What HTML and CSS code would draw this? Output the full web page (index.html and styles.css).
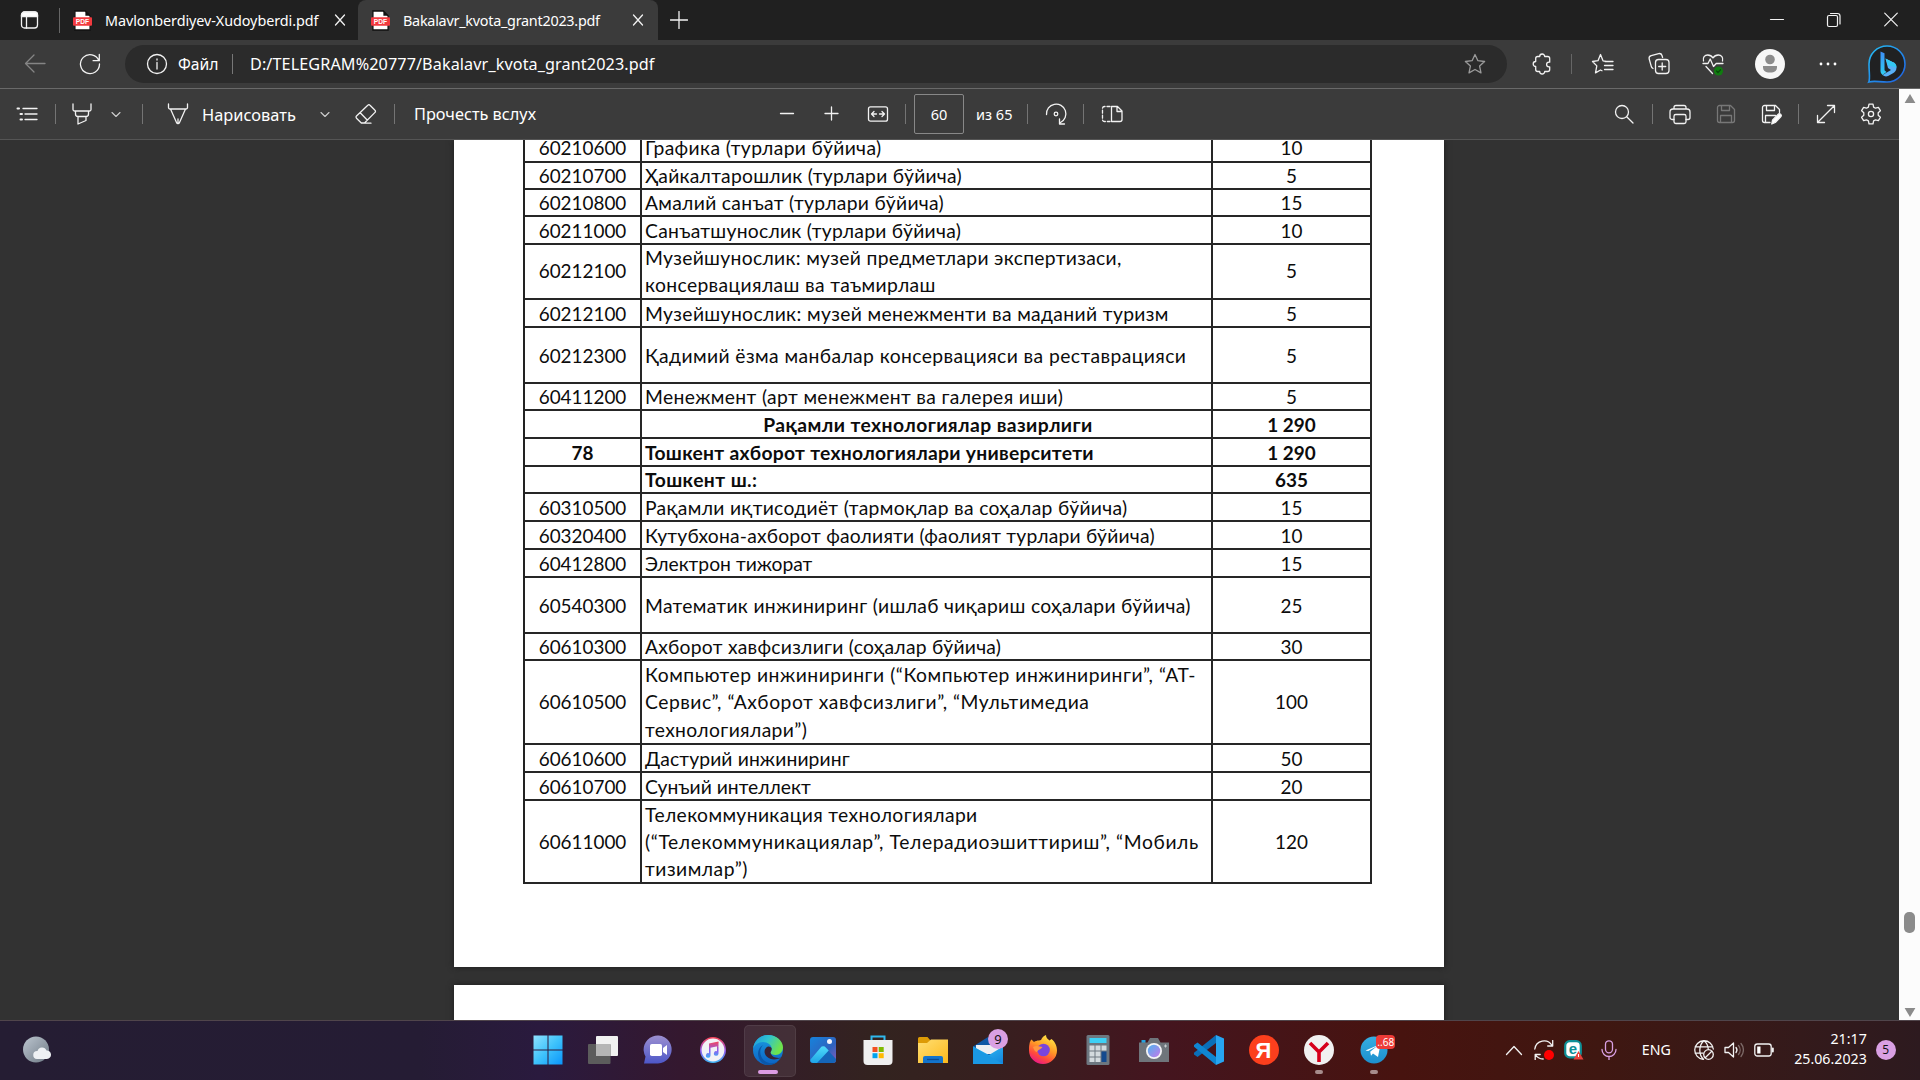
FILE: index.html
```html
<!DOCTYPE html>
<html lang="ru">
<head>
<meta charset="utf-8">
<title>Bakalavr_kvota_grant2023.pdf</title>
<link rel="stylesheet" href="styles.css">
</head>
<body>
<svg class="defs" width="0" height="0">
  <defs>
    <linearGradient id="gWin" x1="0" y1="0" x2="1" y2="1"><stop offset="0" stop-color="#8fe2ff"/><stop offset=".5" stop-color="#3fc3fb"/><stop offset="1" stop-color="#0a95fb"/></linearGradient>
    <linearGradient id="gMoon" x1="0" y1="0" x2="1" y2="1"><stop offset="0" stop-color="#bcc6d0"/><stop offset="1" stop-color="#6f7a85"/></linearGradient>
    <linearGradient id="gChat" x1="0" y1="0" x2="0" y2="1"><stop offset="0" stop-color="#9c8fd0"/><stop offset="1" stop-color="#4d57c8"/></linearGradient>
    <linearGradient id="gMusic" x1="0" y1="0" x2="0" y2="1"><stop offset="0" stop-color="#f5455c"/><stop offset=".55" stop-color="#8c5af0"/><stop offset="1" stop-color="#3fb3f5"/></linearGradient>
    <linearGradient id="gEdgeA" x1="0" y1="0" x2="1" y2=".4"><stop offset="0" stop-color="#1c96dd"/><stop offset=".5" stop-color="#2fc3d0"/><stop offset="1" stop-color="#6fe34b"/></linearGradient>
    <linearGradient id="gEdgeB" x1="0" y1="0" x2="0" y2="1"><stop offset="0" stop-color="#1b9de2"/><stop offset="1" stop-color="#0b62c4"/></linearGradient>
    <linearGradient id="gPhoto" x1="0" y1="0" x2="1" y2="1"><stop offset="0" stop-color="#1683dc"/><stop offset=".6" stop-color="#2f62bd"/><stop offset="1" stop-color="#8a5cb8"/></linearGradient>
    <linearGradient id="gMount" x1="0" y1="0" x2="0" y2="1"><stop offset="0" stop-color="#4fdcfa"/><stop offset="1" stop-color="#1ea4e6"/></linearGradient>
    <linearGradient id="gFold" x1="0" y1="0" x2="1" y2="1"><stop offset="0" stop-color="#ffdf73"/><stop offset="1" stop-color="#fcb91c"/></linearGradient>
    <linearGradient id="gMail" x1="0" y1="0" x2="1" y2="1"><stop offset="0" stop-color="#36c4f6"/><stop offset="1" stop-color="#1283dc"/></linearGradient>
    <linearGradient id="gFox" x1=".8" y1="0" x2=".3" y2="1"><stop offset="0" stop-color="#fff04a"/><stop offset=".45" stop-color="#ff9a26"/><stop offset=".75" stop-color="#ff4a3c"/><stop offset="1" stop-color="#e8168c"/></linearGradient>
    <linearGradient id="gLens" x1="0" y1="0" x2="1" y2="1"><stop offset="0" stop-color="#4fb4ee"/><stop offset="1" stop-color="#c478ea"/></linearGradient>
    <linearGradient id="gTg" x1="0" y1="0" x2="0" y2="1"><stop offset="0" stop-color="#36aee2"/><stop offset="1" stop-color="#1c8fcd"/></linearGradient>
    <linearGradient id="gBing" x1="0" y1="0" x2="1" y2="1"><stop offset="0" stop-color="#25c0f5"/><stop offset="1" stop-color="#1f5de0"/></linearGradient>
    <linearGradient id="gBingB" x1="0" y1="0" x2="0" y2="1"><stop offset="0" stop-color="#3d8df6"/><stop offset="1" stop-color="#2fd0f2"/></linearGradient>
    <symbol id="pdf" viewBox="0 0 20 22">
      <path d="M2 1h11l5 5v15H2z" fill="#fff" stroke="#111" stroke-width="1.4"/>
      <path d="M13 1l5 5h-5z" fill="#111"/>
      <rect x="0" y="7.500" width="20" height="9" rx="1" fill="#f23a3f"/>
      <text x="10" y="14.800" text-anchor="middle" class="pdf-label">PDF</text>
    </symbol>
    <symbol id="close" viewBox="0 0 12 12"><path d="M1.500 1l9 10M10.500 1l-9 10"/></symbol>
    <symbol id="chev" viewBox="0 0 16 16"><path d="M4 6.500l4 4 4-4"/></symbol>
    <symbol id="star" viewBox="0 0 24 24"><path d="M12 2.500l2.900 6.200 6.700.8-5 4.600 1.400 6.800-6-3.400-6 3.400 1.400-6.800-5-4.600 6.700-.8z"/></symbol>
  </defs>
</svg>

<header class="tabs">
  <svg class="ic workspace" viewBox="0 0 20 20"><rect x="1.500" y="2" width="16" height="16" rx="3"/><path d="M1.500 5a3 3 0 013-3h10a3 3 0 013 3v1.500h-16z" fill="#fff"/><path d="M6.500 7v11"/></svg>
  <i class="tab-div"></i>
  <div class="tab">
    <svg class="pdf-ic"><use href="#pdf"/></svg>
    <span class="t tab-a">Mavlonberdiyev-Xudoyberdi.pdf</span>
    <svg class="ic x-ic"><use href="#close"/></svg>
  </div>
  <div class="tab active">
    <svg class="pdf-ic"><use href="#pdf"/></svg>
    <span class="t tab-b">Bakalavr_kvota_grant2023.pdf</span>
    <svg class="ic x-ic"><use href="#close"/></svg>
  </div>
  <svg class="ic new-tab" viewBox="0 0 18 18"><path d="M9 .5v17M.5 9h17"/></svg>
  <div class="win">
    <svg class="ic" viewBox="0 0 16 16"><path d="M1.500 7.500h13"/></svg>
    <svg class="ic" viewBox="0 0 16 16"><rect x="1.500" y="3.500" width="10" height="11" rx="1.500"/><path d="M4.500 1.500h7a2.500 2.500 0 012.500 2.500v8"/></svg>
    <svg class="ic" viewBox="0 0 16 16"><path d="M1.700 1.200l12.600 12.600M14.300 1.200L1.700 13.800"/></svg>
  </div>
</header>

<nav class="nav">
  <svg class="ic n-back" viewBox="0 0 24 24"><path d="M22 11.500H2.500M11 3L2.500 11.500l8.500 8.500"/></svg>
  <svg class="ic n-reload" viewBox="0 0 24 24"><path d="M20.800 8.500A9.500 9.500 0 1021.500 12M21.300 2.500v6.200h-6.200"/></svg>
  <div class="address">
    <svg class="ic" viewBox="0 0 24 24"><circle cx="12" cy="12" r="9.500"/><path d="M12 10.500v6.500M12 7v1"/></svg>
    <span class="t scheme">Файл</span>
    <i class="a-div"></i>
    <span class="t url">D:/TELEGRAM%20777/Bakalavr_kvota_grant2023.pdf</span>
    <svg class="ic dim a-star"><use href="#star"/></svg>
  </div>
  <svg class="ic n-puzzle" viewBox="0 0 24 24"><path d="M9.700 4.500a2.500 2.500 0 015 0h3a2 2 0 012 2v3.700h-.8a2.300 2.300 0 000 4.600h.8v2.700a2 2 0 01-2 2h-3a2.500 2.500 0 01-5 0h-2a2 2 0 01-2-2v-3a2.500 2.500 0 010-5v-3a2 2 0 012-2z"/></svg>
  <i class="n-div"></i>
  <svg class="ic n-fav" viewBox="0 0 24 24"><path d="M22 9.500h-6.500L12 8.800 9.500 2.500 7 8.700l-5.500.8 4.300 4.400-1.300 7 5-2.900 1.500.8M14 9.500h8M13.500 13.500H22M13.500 17.500H22"/></svg>
  <svg class="ic n-coll" viewBox="0 0 24 24"><path d="M6 16.500a3 3 0 01-1.800-2.300L2.200 7a2.800 2.800 0 012-3.400l7.500-2A2.800 2.800 0 0115 3.500l.6 2"/><rect x="8.500" y="7.500" width="13.500" height="14" rx="3"/><path d="M15.200 11v7M11.700 14.500h7"/></svg>
  <svg class="ic n-heart" viewBox="0 0 24 24"><path d="M2.500 9C1.500 5.500 3.700 3 6.700 3c2.500 0 4.200 1.300 5.300 3 1.100-1.700 2.800-3 5.300-3C20.300 3 22.500 5.500 21.500 9M2 11.500h5l2.200-4.500 3.300 7.500 2.700-3H22M5 14.500l6.500 7"/><circle cx="17.500" cy="19" r="4.600" fill="#107c10" stroke="none"/><path d="M15.500 19l1.500 1.500 2.500-2.700" stroke="#0a4a0a"/></svg>
  <svg class="n-avatar" viewBox="0 0 30 30"><circle cx="15" cy="15" r="15" fill="#f7f7f7"/><circle cx="15" cy="10.500" r="4.800" fill="#8c8c8c"/><path d="M8 17h14v1.500a5 5 0 01-5 5h-4a5 5 0 01-5-5z" fill="#8c8c8c"/></svg>
  <svg class="n-dots" viewBox="0 0 24 24"><circle cx="5" cy="12" r="1.400" fill="#fff"/><circle cx="12" cy="12" r="1.400" fill="#fff"/><circle cx="19" cy="12" r="1.400" fill="#fff"/></svg>
  <svg class="n-bing" viewBox="0 0 40 40"><path d="M1.800 38c1.500-3 .2-9 .2-18A18 18 0 1120 38c-8 0-13-1.500-18.200 0z" fill="#202122" stroke="url(#gBing)" stroke-width="1.600"/><path d="M13.500 7.500l4 1.800v17l2 1.700-4 3a4.500 4.500 0 01-2-3.700z" fill="url(#gBingB)"/><path d="M18.500 14.500l7 3.500a6 6 0 014 5.500c0 3-1.500 4.500-3.500 5.700l-4.500 2.600a5.500 5.500 0 01-6-.8l8.500-5-3-2z" fill="#58b0f7"/><path d="M18.500 14.500l7 3.500a6 6 0 014 5.500l-8.500-2z" fill="#33c8f3"/></svg>
</nav>

<div class="main">
<div class="reader">
  <div class="pdfbar">
    <svg class="ic p-list" viewBox="0 0 24 24"><path d="M8 6.500h14M10 12h12M10 17.500h12"/><path d="M2.500 6.500h1.500M5.500 12H7M5.500 17.500H7" stroke-width="2"/></svg>
    <i class="d p-d1"></i>
    <svg class="ic p-hi" viewBox="0 0 24 24"><path d="M3 2v5.500a1.500 1.500 0 001.500 1.500h15a1.500 1.500 0 001.500-1.500V2M5.500 9v3a2.500 2.500 0 002.500 2.500h8a2.500 2.500 0 002.500-2.500V9M8 14.500V22l8-3.500v-4"/></svg>
    <svg class="ic p-c1"><use href="#chev"/></svg>
    <i class="d p-d2"></i>
    <svg class="ic p-pen" viewBox="0 0 24 24"><path d="M2.500 2v3.500a1.500 1.500 0 001.500 1.500h16a1.500 1.500 0 001.500-1.500V2M4.500 7l6 13.500c.6 1.500 2.400 1.500 3 0L19.500 7M12 17v4"/></svg>
    <span class="t draw">Нарисовать</span>
    <svg class="ic p-c2"><use href="#chev"/></svg>
    <svg class="ic p-er" viewBox="0 0 24 24"><path d="M13.800 3.200a1.500 1.500 0 012.200 0l5 5a1.500 1.500 0 010 2.200L10.500 21H7.300L2.500 16.200a1.500 1.500 0 010-2.200zM6.200 10.800l7 7.200M7.500 21.200h9.500"/></svg>
    <i class="d p-d3"></i>
    <span class="t read">Прочесть вслух</span>
    <svg class="ic p-minus" viewBox="0 0 24 24"><path d="M5.500 11.500h13"/></svg>
    <svg class="ic p-plus" viewBox="0 0 24 24"><path d="M12.500 5v13M6 11.500h13"/></svg>
    <svg class="ic p-fit" viewBox="0 0 24 24"><rect x="2.500" y="4.800" width="19" height="14.400" rx="2"/><path d="M10.500 12H5.500M8 9.500L5.500 12 8 14.500M13.500 12h5M16 9.500l2.500 2.500-2.500 2.500"/></svg>
    <i class="d p-d4"></i>
    <div class="pageno"><span class="t num">60</span></div>
    <span class="t of">из 65</span>
    <i class="d p-d5"></i>
    <svg class="ic p-rot" viewBox="0 0 24 24"><path d="M2.500 12.500A9.700 9.700 0 1116.500 20.500M20.500 22h-5v-5"/><circle cx="12" cy="12" r="1.800"/></svg>
    <i class="d p-d6"></i>
    <svg class="ic p-view" viewBox="0 0 24 24"><path d="M10 4.500H4.500a2 2 0 00-2 2v11a2 2 0 002 2H10" stroke-dasharray="3 2"/><path d="M11.500 4.500h6l4.500 4.500v8.500a2 2 0 01-2 2h-8.500zM17 4.500v5h5"/></svg>
    <svg class="ic p-find" viewBox="0 0 24 24"><circle cx="10" cy="10" r="6.500"/><path d="M14.700 14.700L21 21"/></svg>
    <i class="d p-d7"></i>
    <svg class="ic p-print" viewBox="0 0 24 24"><path d="M6 7V5.500a2 2 0 012-2h8a2 2 0 012 2V7M6 17.500H4a2 2 0 01-2-2V10a3 3 0 013-3h14a3 3 0 013 3v5.500a2 2 0 01-2 2h-2"/><rect x="6" y="12.500" width="12" height="9" rx="1.800"/></svg>
    <svg class="ic off p-save" viewBox="0 0 24 24"><path d="M3.500 5.500a2 2 0 012-2h11l4 4v11a2 2 0 01-2 2h-13a2 2 0 01-2-2zM7.500 3.500v5h8v-5M6.500 20.500v-7h11v7"/></svg>
    <svg class="ic p-edit" viewBox="0 0 24 24"><path d="M11 20.500H5.500a2 2 0 01-2-2v-13a2 2 0 012-2h11l4 4v3M7.500 3.500v5h8v-5M6.500 20.500v-7h10"/><path d="M12.800 22l.8-4 5.400-5.600a1.800 1.800 0 012.700 2.500L16.300 20.500z" fill="#fff"/></svg>
    <i class="d p-d8"></i>
    <svg class="ic p-exp" viewBox="0 0 24 24"><path d="M3.500 20.500l17-17M13.500 3.500h7v7M3.500 13.500v7h7"/></svg>
    <svg class="ic p-gear" viewBox="0 0 24 24"><path d="M10 2.200h4l.6 2.900 1.900 1.100 2.900-.9 2 3.400-2.200 2v2.600l2.200 2-2 3.400-2.900-.9-1.900 1.100-.6 2.900h-4l-.6-2.900-1.900-1.100-2.900.9-2-3.400 2.200-2v-2.600l-2.200-2 2-3.400 2.900.9 1.900-1.100z"/><circle cx="12" cy="12" r="2.600"/></svg>
  </div>
  <div class="view">
    <section class="page first">
      <table class="quota">
        <colgroup><col class="c1"><col class="c2"><col class="c3"></colgroup>
        <tr class="h28 top"><td>60210600</td><td><span class="t s5">Графика (турлари бўйича)</span></td><td>10</td></tr>
        <tr class="h27"><td>60210700</td><td><span class="t s3">Ҳайкалтарошлик (турлари бўйича)</span></td><td>5</td></tr>
        <tr class="h27"><td>60210800</td><td><span class="t s4">Амалий санъат (турлари бўйича)</span></td><td>15</td></tr>
        <tr class="h28"><td>60211000</td><td><span class="t s3">Санъатшунослик (турлари бўйича)</span></td><td>10</td></tr>
        <tr class="h55"><td>60212100</td><td><span class="t s4">Музейшунослик: музей предметлари экспертизаси,</span><br><span class="t s5">консервациялаш ва таъмирлаш</span></td><td>5</td></tr>
        <tr class="h28"><td>60212100</td><td><span class="t s5">Музейшунослик: музей менежменти ва маданий туризм</span></td><td>5</td></tr>
        <tr class="h56"><td>60212300</td><td><span class="t s6">Қадимий ёзма манбалар консервацияси ва реставрацияси</span></td><td>5</td></tr>
        <tr class="h27"><td>60411200</td><td><span class="t s5">Менежмент (арт менежмент ва галерея иши)</span></td><td>5</td></tr>
        <tr class="h28 b mid"><td></td><td><span class="t s6">Рақамли технологиялар вазирлиги</span></td><td>1 290</td></tr>
        <tr class="h28 b"><td>78</td><td><span class="t s3">Тошкент ахборот технологиялари университети</span></td><td>1 290</td></tr>
        <tr class="h27 b"><td></td><td><span class="t s6">Тошкент ш.:</span></td><td>635</td></tr>
        <tr class="h28"><td>60310500</td><td><span class="t s4">Рақамли иқтисодиёт (тармоқлар ва соҳалар бўйича)</span></td><td>15</td></tr>
        <tr class="h28"><td>60320400</td><td><span class="t s2">Кутубхона-ахборот фаолияти (фаолият турлари бўйича)</span></td><td>10</td></tr>
        <tr class="h28"><td>60412800</td><td><span class="t">Электрон тижорат</span></td><td>15</td></tr>
        <tr class="h56"><td>60540300</td><td><span class="t s4">Математик инжиниринг (ишлаб чиқариш соҳалари бўйича)</span></td><td>25</td></tr>
        <tr class="h27"><td>60610300</td><td><span class="t s3">Ахборот хавфсизлиги (соҳалар бўйича)</span></td><td>30</td></tr>
        <tr class="h84"><td>60610500</td><td><span class="t s7">Компьютер инжиниринги (“Компьютер инжиниринги”, “АТ-</span><br><span class="t s7">Сервис”, “Ахборот хавфсизлиги”, “Мультимедиа</span><br><span class="t s5">технологиялари”)</span></td><td>100</td></tr>
        <tr class="h28"><td>60610600</td><td><span class="t s1">Дастурий инжиниринг</span></td><td>50</td></tr>
        <tr class="h28"><td>60610700</td><td><span class="t">Сунъий интеллект</span></td><td>20</td></tr>
        <tr class="h83"><td>60611000</td><td><span class="t s5">Телекоммуникация технологиялари</span><br><span class="t s8">(“Телекоммуникациялар”, Телерадиоэшиттириш”, “Мобиль</span><br><span class="t s7">тизимлар”)</span></td><td>120</td></tr>
      </table>
    </section>
    <section class="page second"></section>
  </div>
</div>
<aside class="scroll">
  <svg class="arrow" viewBox="0 0 12 10"><path d="M6 0l6 10H0z" fill="#8b8b8b"/></svg>
  <i class="thumb"></i>
  <svg class="arrow" viewBox="0 0 12 10"><path d="M0 0h12L6 10z" fill="#8b8b8b"/></svg>
</aside>
</div>

<footer class="taskbar">
  <svg class="weather" viewBox="0 0 30 28"><circle cx="14" cy="13.500" r="13" fill="url(#gMoon)"/><path d="M15 23a4 4 0 01.5-8 4.800 4.800 0 019-.5 4 4 0 01.5 8.500z" fill="#eef1f4"/></svg>
  <div class="apps">
    <span class="app"><svg viewBox="0 0 30 30"><path d="M.5.500h14v14H.5zM15.500.5h14v14h-14zM.5 15.500h14v14H.5zM15.500 15.500h14v14h-14z" fill="url(#gWin)"/></svg></span>
    <span class="app"><svg viewBox="0 0 30 30"><rect x="8" y="1" width="22" height="20" rx="1" fill="#f1f1f1"/><rect x="0" y="9" width="22.500" height="20" rx="1" fill="#5c5c5c"/><path d="M8 9h14.500v12H8z" fill="#b5b5b5"/></svg></span>
    <span class="app"><svg viewBox="0 0 30 30"><path d="M1 28.500l1.500-7A14 14 0 1115 28.500z" fill="url(#gChat)"/><rect x="7" y="9" width="12" height="12" rx="1.800" fill="#fff"/><path d="M20 13l4-3v10l-4-3z" fill="#fff"/></svg></span>
    <span class="app"><svg viewBox="0 0 30 30"><circle cx="15" cy="15" r="12.200" fill="#f2f2f6" stroke="url(#gMusic)" stroke-width="1.600"/><path d="M12.500 9.500l8-1.700v3.200l-8 1.700v7.800a2.300 2.300 0 11-1.500-2.200V8.500l9.500-2v12a2.300 2.300 0 11-1.500-2.200V9" fill="url(#gMusic)"/></svg></span>
    <span class="app current"><svg viewBox="0 0 30 30"><circle cx="15" cy="15" r="15" fill="url(#gEdgeB)"/><path d="M0 14C1 5.500 7.500 0 15 0c8.500 0 15 6 15 12.500 0 4.500-3.500 7.500-7.500 7.500-3 0-5-1-5-2.500 0-1.200 1.200-1.700 1.200-4 0-3.500-4-6.500-8.700-6.500C5 7 1.500 10 0 14z" fill="url(#gEdgeA)"/><path d="M10 10c-4 4-4 12 2.500 16.500 4 2.700 10 2.500 14-1.500A15 15 0 0115 30C9 29.500 5 24 5 18.500 5 15 7 11.500 10 10z" fill="#0b57a8"/><path d="M14.500 11.700c-3.500 2-4 6.300-.8 9.800 4 4 10.300 3.500 15 .8-3.500 1.500-10.200.5-11.200-4.800.3-1 1.200-1.700 1.200-4-.5-1.500-2.700-2.500-4.200-1.800z" fill="#3a2435"/></svg><i class="run wide"></i></span>
    <span class="app"><svg viewBox="0 0 30 30"><rect x="2" y="2" width="26" height="26" rx="3" fill="url(#gPhoto)"/><path d="M7 28l12-13.500L28 24v1a3 3 0 01-3 3z" fill="#1565b8"/><path d="M2.500 24.500l10-11.800a3.400 3.400 0 015.500 0l2.700 2.800L9 28H5a3 3 0 01-2.500-3.500z" fill="url(#gMount)"/><circle cx="21.500" cy="6.500" r="2.500" fill="#f4f4fb"/></svg></span>
    <span class="app"><svg viewBox="0 0 30 30"><path d="M8.500 6V1.500h13V6" fill="none" stroke="#2fb9ee" stroke-width="2"/><path d="M.5 5h29v21a4 4 0 01-4 4h-21a4 4 0 01-4-4z" fill="#efefef"/><path d="M9.500 12h5v5h-5z" fill="#f25022"/><path d="M15.700 12h5v5h-5z" fill="#7fba00"/><path d="M9.500 18.200h5v5h-5z" fill="#00a4ef"/><path d="M15.700 18.200h5v5h-5z" fill="#ffb900"/></svg></span>
    <span class="app"><svg viewBox="0 0 30 30"><path d="M0 3.500A1.500 1.500 0 011.500 2h8l3 3.500L9 9H0z" fill="#dd9b06"/><path d="M0 8h9l4-3.500h17V28H0z" fill="url(#gFold)"/><path d="M5 28v-5a2 2 0 012-2h16a2 2 0 012 2v5z" fill="#1374cc"/><path d="M9 24.500h12" stroke="#0a4b93" stroke-width="1.300"/></svg></span>
    <span class="app"><svg viewBox="0 0 30 30"><path d="M0 11.500L15 2l15 9.500-15 10z" fill="#0f57a4"/><path d="M3 10h24v9H3z" fill="#eeeef1"/><path d="M0 11.500L16 20 30 11.500V29H0z" fill="url(#gMail)"/><path d="M0 11.500L30 29H0z" fill="#1a98e3"/></svg><b class="badge">9</b></span>
    <span class="app"><svg viewBox="0 0 30 30"><path d="M1.500 9c.3-2 1-3.500 2-4.500L6 7c1.500-1 3-1.500 5-1.500L13 5c1-2.500 3-4.500 5-5 0 2.500 1.500 4 3.500 5.500L23.500 4c4 3 5.500 7.500 5.500 11.500a14 13.500 0 01-28 0C1 13 1 11 1.500 9z" fill="url(#gFox)"/><circle cx="15.500" cy="15" r="6.300" fill="#7a45dd"/><path d="M5 12c4-2 7 0 9.500 0-1 2-4 2.500-5 4C8.500 19 6 15 5 12z" fill="#ff9640"/></svg></span>
    <span class="app"><svg viewBox="0 0 30 30"><rect x="3.500" y="0" width="23" height="30" rx="1.500" fill="#6d7780"/><rect x="6.500" y="3" width="17" height="5" fill="#3dd0f5"/><path d="M6.500 10.500h5v5h-5zM12.500 10.500h5v5h-5zM18.500 10.500h5v5h-5zM6.500 16.500h5v5h-5zM12.500 16.500h5v5h-5zM6.500 22.500h5V27h-5zM12.500 22.500h5V27h-5z" fill="#d3dade"/><path d="M18.500 16.500h5V27h-5z" fill="#144a8e"/></svg></span>
    <span class="app"><svg viewBox="0 0 30 30"><path d="M2.500 5h4v3h-4z" fill="#25a4e0"/><path d="M0 7.500h8.500L11 3h8l2.500 4.500H30V27H0z" fill="#6f757b"/><circle cx="15" cy="16" r="8" fill="#f3f3f5"/><circle cx="15" cy="16" r="6.200" fill="url(#gLens)"/><path d="M26.500 9.500v3M25 11h3" stroke="#c8ccd0"/></svg></span>
    <span class="app"><svg viewBox="0 0 30 30"><path d="M22 0l8 3.500v23L22 30z" fill="#27a5f1"/><path d="M22 0v8L3.500 22 0 19.500v-1.800z" fill="#0a6fb9"/><path d="M22 30v-8L3.500 7.500 0 10v1.800z" fill="#0f86d2"/></svg></span>
    <span class="app"><svg viewBox="0 0 30 30"><circle cx="15" cy="15" r="15" fill="#fc3f1d"/><text x="14.500" y="23" text-anchor="middle" class="ya">Я</text></svg></span>
    <span class="app"><svg viewBox="0 0 30 30"><circle cx="15" cy="15" r="15" fill="#f1f1f1"/><path d="M6 8l9 9 9-9M15 16v11" fill="none" stroke="#d6001c" stroke-width="3.600"/></svg><i class="run"></i></span>
    <span class="app"><svg viewBox="0 0 30 30"><circle cx="15" cy="15" r="13.500" fill="url(#gTg)"/><path d="M6.500 15.500l15-6.500-2.500 13-5-3.500-2 2.200-.8-4 7-5.700-9 5z" fill="#fff"/></svg><b class="count">..68</b><i class="run"></i></span>
  </div>
  <div class="tray">
    <svg class="ic tr-up" viewBox="0 0 20 20"><path d="M2.500 14.500l7.500-8 7.500 8"/></svg>
    <svg class="ic tr-sync" viewBox="0 0 20 20"><path d="M.8 9A9.300 9.300 0 0118 5.500M18.700.5v5.500h-5M1.200 20v-5.500h5M1.200 14.500a9.500 9.500 0 008 4.500"/><circle cx="15" cy="15" r="5" fill="#f00" stroke="none"/></svg>
    <svg class="tr-e" viewBox="0 0 20 20"><rect x="1.200" y="1.200" width="15.600" height="16.200" rx="4.500" fill="#fff" stroke="#0f8f96" stroke-width="2.200"/><text x="9" y="14" text-anchor="middle" class="eset">e</text><path d="M14.500 11l5 8.500h-10z" fill="#e8403a"/><path d="M14.500 14v3" stroke="#fff"/></svg>
    <svg class="ic tr-mic" viewBox="0 0 20 20"><rect x="6.500" y="0.800" width="7" height="12" rx="3.500"/><path d="M3 9.500a7 7 0 0014 0M10 16.500V20"/></svg>
    <span class="t lang">ENG</span>
    <svg class="ic tr-globe" viewBox="0 0 20 20"><path d="M9 19.300A9.300 9.300 0 1119.300 9M1.200 6.800h17.600M1.200 13.200H9M9.500 19.300C4.500 15 4.500 5 10 .8c2.800 2.200 4 5 4.200 8"/><circle cx="14.500" cy="14.500" r="4.800"/><path d="M11.200 17.800l6.600-6.600"/></svg>
    <svg class="ic tr-vol" viewBox="0 0 20 20"><path d="M1 7.500h3.500L9.500 3v14l-5-4.500H1zM12 7.500a4 4 0 010 5"/><path d="M14.500 5.500a7 7 0 010 9M17 3.500a10 10 0 010 13" stroke="#7d6a68"/></svg>
    <svg class="ic tr-bat" viewBox="0 0 20 20"><rect x=".8" y="4" width="16.400" height="12" rx="2.500"/><path d="M3.200 6.500h3.300v7H3.200z" fill="#fff" stroke="none"/><path d="M18.800 8.500v3" stroke-width="2"/></svg>
    <div class="clock"><span class="t">21:17</span><span class="t">25.06.2023</span></div>
    <b class="notif">5</b>
  </div>
</footer>
</body>
</html>
```
FILE: styles.css
```css
* { box-sizing: border-box; }
body {
  margin: 0;
  width: 1920px;
  height: 1080px;
  overflow: hidden;
  display: flex;
  flex-direction: column;
  background: #323232;
  color: #fff;
  font-family: "Noto Sans", "Open Sans", sans-serif;
  font-size: 14.500px;
}
.defs { position: absolute; }
svg { display: block; flex: none; }
.t { display: inline-block; white-space: nowrap; flex: none; }
.ic { fill: none; stroke: #f2f2f2; stroke-width: 1.300; stroke-linecap: round; stroke-linejoin: round; width: 24px; height: 24px; }
.ic.dim { stroke: #9a9a9a; }
.ic.off { stroke: #777; }
.pdf-label { font: bold 7px "Liberation Sans", sans-serif; fill: #fff; }

/* Tab strip */
.tabs { height: 40px; flex: none; background: #202020; display: flex; align-items: center; }
.ic.workspace { width: 20px; height: 20px; margin-left: 20px; }
.tab-div { width: 1px; height: 25px; margin-left: 19px; background: #666; }
.tab { width: 298px; height: 40px; display: flex; align-items: center; padding-left: 13px; }
.tab.active { width: 300px; background: #3b3b3b; border-radius: 8px 8px 0 0; }
.pdf-ic { width: 19px; height: 21px; }
.tab .t { margin-left: 13px; font-size: 14.400px; }
.tab-a { width: 215px; letter-spacing: -.08px; }
.tab-b { width: 197px; letter-spacing: -.260px; }
.ic.x-ic { width: 12px; height: 12px; margin-left: 14px; }
.tab-b + .x-ic { margin-left: 32px; }
.ic.new-tab { width: 18px; height: 18px; margin-left: 12px; }
.win { margin-left: auto; display: flex; gap: 41px; padding-right: 21px; }
.win .ic { width: 16px; height: 16px; stroke-width: 1.200; }

/* Navigation row */
.nav { height: 49px; flex: none; background: #3b3b3b; border-bottom: 1px solid #696969; display: flex; align-items: center; }
.ic.n-back { margin-left: 23px; stroke: #858585; }
.n-reload { margin-left: 31px; }
.address { width: 1382px; height: 38px; margin-left: 23px; padding: 0 20px; border-radius: 19px; background: #2b2b2b; display: flex; align-items: center; }
.scheme { width: 54px; margin-left: 9px; font-size: 15.700px; }
.a-div { width: 1px; height: 20px; background: #777; }
.url { margin-left: 17px; font-size: 16.200px; letter-spacing: .1px; }
.a-star { margin-left: auto; }
.n-puzzle { margin-left: 23px; }
.n-div { width: 1px; height: 20px; margin-left: 17px; background: #666; }
.n-fav { margin-left: 19px; }
.n-coll { margin-left: 32px; }
.n-heart { margin-left: 30px; }
.n-avatar { width: 30px; height: 30px; margin-left: 30px; }
.n-dots { width: 24px; height: 24px; margin-left: 31px; }
.n-bing { width: 40px; height: 40px; margin-left: 27px; }

/* Reader */
.main { flex: 1; min-height: 0; display: flex; }
.reader { flex: 1; display: flex; flex-direction: column; min-width: 0; }
.pdfbar { height: 51px; flex: none; background: #3b3b3b; border-bottom: 1px solid #555; display: flex; align-items: center; }
.d { width: 1px; height: 20px; background: #747474; flex: none; }
.p-list { margin-left: 15px; }
.p-d1 { margin-left: 16px; }
.p-hi { margin-left: 14px; }
.ic.p-c1, .ic.p-c2 { width: 16px; height: 16px; stroke-width: 1.100; stroke: #cfcfcf; }
.p-c1 { margin-left: 14px; }
.p-d2 { margin-left: 18px; }
.p-pen { margin-left: 23px; }
.draw { width: 95px; margin-left: 12px; font-size: 16.400px; }
.p-c2 { margin-left: 20px; }
.p-er { margin-left: 21px; }
.p-d3 { margin-left: 16px; }
.read { width: 124px; margin-left: 19px; font-size: 16.300px; }
.p-minus { margin-left: 237px; }
.p-plus { margin-left: 20px; }
.p-fit { margin-left: 23px; }
.p-d4 { margin-left: 15px; }
.pageno { width: 50px; height: 40px; margin-left: 8px; border: 1px solid #888; border-radius: 2px; display: flex; align-items: center; justify-content: center; }
.of { width: 36px; margin-left: 12px; }
.p-d5 { margin-left: 15px; }
.p-rot { margin-left: 16px; }
.p-d6 { margin-left: 15px; }
.p-view { margin-left: 16px; }
.p-find { margin-left: 488px; }
.p-d7 { margin-left: 16px; }
.p-print { margin-left: 15px; }
.p-save { margin-left: 22px; }
.p-edit { margin-left: 21px; }
.p-d8 { margin-left: 15px; }
.p-exp { margin-left: 15px; }
.p-gear { margin-left: 21px; }

.view { flex: 1; min-height: 0; overflow: hidden; background: #323232; padding-left: 454px; }
.page { width: 990px; background: #fff; box-shadow: 0 0 6px #1c1c1c; color: #0c0c0c; }
.first { height: 827px; overflow: hidden; padding-left: 69px; }
.second { height: 60px; margin-top: 18px; }
.quota { width: 849px; margin-top: -5px; border-collapse: separate; border-spacing: 0; table-layout: fixed; font-family: Lato, "Noto Sans", sans-serif; font-size: 18.900px; border-left: 2px solid #222; }
.c1 { width: 117px; }
.c2 { width: 571px; }
.c3 { width: 159px; }
.quota td { padding: 1px 0 0; text-align: center; vertical-align: middle; border-bottom: 2px solid #262626; border-right: 2px solid #262626; line-height: 24px; }
.quota td:nth-child(2) { text-align: left; padding-left: 3px; font-size: 19.300px; }
.quota .mid td:nth-child(2) { text-align: center; }
.b { font-weight: 700; }
.quota .top td { padding-top: 0; }
.h27 td { height: 27px; }
.h28 td { height: 28px; }
.quota .h55 td { height: 55px; line-height: 26.500px; padding-top: 0; }
.h56 td { height: 56px; }
.quota .h83 td { height: 83px; line-height: 27px; padding-top: 0; }
.quota .h84 td { height: 84px; line-height: 27.300px; padding-top: 0; }
/* Tracking steps for the programme names */
.s1 { letter-spacing: .130px; }
.s2 { letter-spacing: .210px; }
.s3 { letter-spacing: .270px; }
.s4 { letter-spacing: .320px; }
.s5 { letter-spacing: .370px; }
.s6 { letter-spacing: .420px; }
.s7 { letter-spacing: .520px; }
.s8 { letter-spacing: .610px; }

.scroll { width: 21px; flex: none; background: #fcfcfc; display: flex; flex-direction: column; align-items: center; padding: 5px 0 3px; }
.arrow { width: 12px; height: 9px; }
.thumb { width: 11px; height: 21px; margin: 809px 0 auto; border-radius: 5px; background: #8b8b8b; }

/* Taskbar */
.taskbar { height: 60px; flex: none; border-top: 1px solid #50454b; padding-bottom: 1px; display: flex; align-items: center; background: linear-gradient(90deg, #251d33 0, #251c34 420px, #2a1a3e 540px, #34182f 680px, #33231f 880px, #36201f 980px, #44151f 1160px, #47130f 1400px, #3f1711 1600px, #341a1b 1800px, #2d1a1f 1920px); }
.weather { width: 30px; height: 28px; margin-left: 22px; }
.apps { display: flex; margin-left: 468.500px; }
.app { position: relative; width: 55.050px; height: 58px; display: flex; align-items: center; justify-content: center; }
.app svg { width: 30px; height: 30px; }
.current::before { content: ""; position: absolute; left: 3px; top: 4px; width: 50px; height: 50px; border-radius: 5px; background: rgba(255,255,255,.08); border: 1px solid rgba(255,255,255,.07); }
.current svg { position: relative; }
.run { position: absolute; left: 24px; bottom: 5px; width: 8px; height: 4px; border-radius: 2px; background: #a78c8c; }
.run.wide { left: 17.500px; width: 20px; background: #dc9ce4; }
.badge { position: absolute; left: 27px; top: 8px; width: 20px; height: 20px; border-radius: 50%; background: #d9a0e3; color: #111; font-size: 13px; font-weight: 400; line-height: 20px; text-align: center; }
.count { position: absolute; left: 30px; top: 14px; width: 19px; height: 14px; border-radius: 4px; background: #ee3b37; color: #fff; font-size: 10px; font-weight: 400; line-height: 14px; text-align: center; }
.ya { font: bold 22px "Liberation Sans", sans-serif; fill: #fff; }
.eset { font: bold 15px "Liberation Sans", sans-serif; fill: #0f8f96; }
.tray { display: flex; align-items: center; margin-left: 102.500px; }
.tray svg { width: 20px; height: 20px; }
.tr-sync { margin-left: 10px; }
.tr-e { margin-left: 10px; }
.ic.tr-mic { margin-left: 15px; stroke: #d9a0e3; }
.lang { width: 29px; margin-left: 23px; line-height: 18px; padding-bottom: 1px; font-size: 14.200px; }
.tr-globe { margin-left: 23px; }
.tr-vol { margin-left: 10px; }
.tr-bat { margin-left: 10px; }
.clock { width: 93px; display: flex; flex-direction: column; align-items: flex-end; line-height: 20px; font-size: 14.200px; padding-bottom: 2px; }
.notif { width: 20px; height: 20px; margin-left: 9px; border-radius: 50%; background: #d9a0e3; color: #111; font-size: 12px; font-weight: 400; line-height: 20px; text-align: center; }
```
